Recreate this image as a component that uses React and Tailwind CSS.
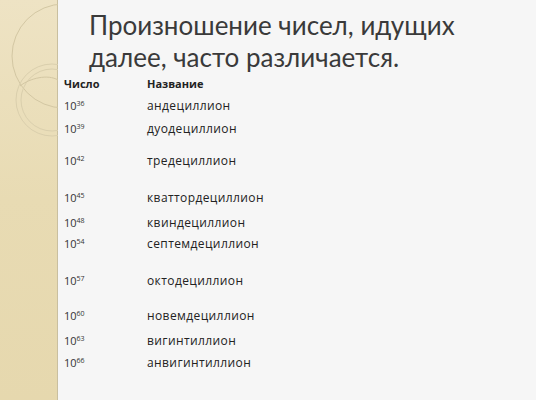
const rows = [
  { exp: '36', name: 'андециллион', mt: 'mt-[2px]' },
  { exp: '39', name: 'дуодециллион', mt: 'mt-[3px]' },
  { exp: '42', name: 'тредециллион', mt: 'mt-[12px]' },
  { exp: '45', name: 'кваттордециллион', mt: 'mt-[17px]' },
  { exp: '48', name: 'квиндециллион', mt: 'mt-[5px]' },
  { exp: '54', name: 'септемдециллион', mt: 'mt-[1px]' },
  { exp: '57', name: 'октодециллион', mt: 'mt-[17px]' },
  { exp: '60', name: 'новемдециллион', mt: 'mt-[15px]' },
  { exp: '63', name: 'вигинтиллион', mt: 'mt-[5px]' },
  { exp: '66', name: 'анвигинтиллион', mt: 'mt-[2px]' },
];

function Ornament() {
  return (
    <svg width="58" height="160" viewBox="0 0 58 160" className="block">
      <circle cx="64" cy="56" r="52" fill="none" stroke="#d3c7a3" strokeWidth="1" />
      <circle cx="52" cy="100" r="36" fill="none" stroke="#dacfad" strokeWidth="1" />
      <circle cx="52" cy="100" r="31" fill="none" stroke="#dacfad" strokeWidth="1" />
      <path d="M20 86 C 30 78, 48 74, 58 80" fill="none" stroke="#d3c7a3" strokeWidth="1" />
    </svg>
  );
}

export default function App() {
  return (
    <div className="w-[536px] h-[400px] flex bg-[#f6f6f6] overflow-hidden" style={{ fontFamily: '"Open Sans", "Liberation Sans", sans-serif' }}>
      {/* left decorative band */}
      <aside className="w-[58px] shrink-0 border-r border-[#c9bf9f] bg-gradient-to-b from-[#eee3c4] via-[#e8dbb3] to-[#e6d8ae]">
        <Ornament />
      </aside>

      <main className="flex-1 flex flex-col">
        <h1
          className="pl-[31px] pt-[9px] text-[26px] leading-[32px] text-[#3a3a3a] font-normal"
          style={{ fontFamily: 'Lato, "Open Sans", sans-serif' }}
        >
          Произношение чисел, идущих
          <br />
          далее, часто различается.
        </h1>

        <div className="pl-[6px] mt-[1px] text-[#222]">
          <div className="flex h-[20px] items-center text-[11px] font-bold">
            <span className="w-[83px]">Число</span>
            <span>Название</span>
          </div>
          {rows.map((r) => (
            <div key={r.exp} className={`flex h-[20px] items-center ${r.mt}`}>
              <span className="w-[83px] text-[11px] text-[#333]">
                10<span className="relative top-[-4px] text-[7px]">{r.exp}</span>
              </span>
              <span className="text-[12px] tracking-[0.4px]">{r.name}</span>
            </div>
          ))}
        </div>
      </main>
    </div>
  );
}
